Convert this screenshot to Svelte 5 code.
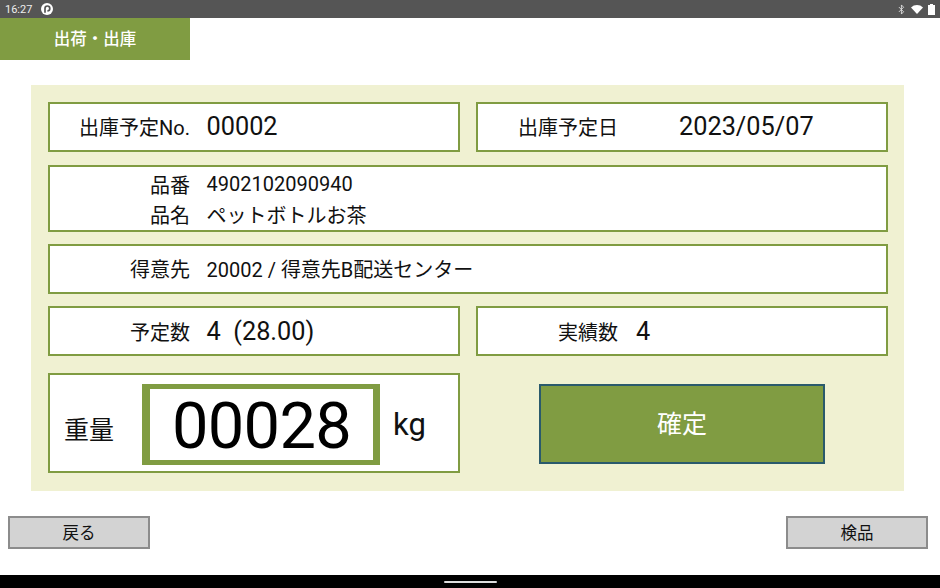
<script>
  // Static shipping screen; values would normally come from the picking API
  const rowGap = 12;
  const order = {
    no: '00002',
    date: '2023/05/07',
    code: '4902102090940',
    name: 'ペットボトルお茶',
    customer: '20002 / 得意先B配送センター',
    planned: '4',
    plannedWeight: '(28.00)',
    actual: '4',
    weight: '00028'
  };
</script>

<div class="screen" style="--row-gap: {rowGap}px">
  <div class="statusbar">
    <span class="time">16:27</span>
    <svg class="app-icon" viewBox="0 0 12 12" width="12" height="12">
      <circle cx="6" cy="6" r="6" fill="#fff" />
      <path d="M4 9.800V5.400a2.400 2.400 0 1 1 2.400 2.400" fill="none" stroke="#555" stroke-width="1.700" />
    </svg>
    <span class="spacer"></span>
    <svg class="bt" viewBox="0 0 8 12" width="7" height="11">
      <path d="M1 3.200l5.400 5.400-2.500 2.600v-10.400l2.500 2.600-5.400 5.400" fill="none" stroke="#e4e4e4" stroke-width="1" />
    </svg>
    <svg class="wifi" viewBox="0 0 12 9" width="12" height="9">
      <path d="M0 2.400a9 9 0 0 1 12 0l-6 6.600z" fill="#fff" />
    </svg>
    <svg class="battery" viewBox="0 0 7 11" width="7" height="11">
      <path d="M2 0h3v1h2v10h-7v-10h2z" fill="#fff" />
    </svg>
  </div>

  <div class="tab">出荷・出庫</div>

  <main class="panel">
    <div class="row two">
      <div class="box head">
        <span class="label">出庫予定No.</span>
        <span class="value big">{order.no}</span>
      </div>
      <div class="box head">
        <span class="label">出庫予定日</span>
        <span class="value big date">{order.date}</span>
      </div>
    </div>

    <div class="box item">
      <div class="line">
        <span class="label">品番</span>
        <span class="value">{order.code}</span>
      </div>
      <div class="line">
        <span class="label">品名</span>
        <span class="value">{order.name}</span>
      </div>
    </div>

    <div class="box customer">
      <span class="label">得意先</span>
      <span class="value">{order.customer}</span>
    </div>

    <div class="row two">
      <div class="box">
        <span class="label">予定数</span>
        <span class="value big">{order.planned}&nbsp;&nbsp;{order.plannedWeight}</span>
      </div>
      <div class="box">
        <span class="label">実績数</span>
        <span class="value big actual">{order.actual}</span>
      </div>
    </div>

    <div class="row two last">
      <div class="box scale">
        <span class="scale-label">重量</span>
        <div class="weight">{order.weight}</div>
        <span class="unit">kg</span>
      </div>
      <div class="confirm-wrap">
        <button class="confirm">確定</button>
      </div>
    </div>
  </main>

  <div class="footer">
    <button class="nav-btn">戻る</button>
    <button class="nav-btn">検品</button>
  </div>

  <div class="navbar"><span class="pill"></span></div>
</div>

<style>
  :global(body) {
    margin: 0;
    background: #fff;
  }

  .screen {
    width: 940px;
    height: 588px;
    display: flex;
    flex-direction: column;
    overflow: hidden;
    font-family: Roboto, "Noto Sans CJK JP", sans-serif;
    color: #111;
  }

  .statusbar {
    height: 18px;
    flex: none;
    background: #555;
    display: flex;
    align-items: center;
    padding: 0 5px;
    color: #eee;
    font-size: 11px;
  }

  .app-icon {
    margin-left: 9px;
  }

  .spacer {
    flex: 1;
  }

  .wifi {
    margin-left: 6px;
    margin-right: 5px;
  }

  .tab {
    box-sizing: border-box;
    width: 190px;
    height: 42px;
    padding-bottom: 2px;
    flex: none;
    background: #809c42;
    color: #fff;
    font-size: 16.5px;
    font-weight: 500;
    display: flex;
    align-items: center;
    justify-content: center;
  }

  .panel {
    margin: 25px 36px 0 31px;
    height: 372px;
    flex: none;
    padding: 17px 16px 17px 17px;
    background: #f0f1d2;
    display: flex;
    flex-direction: column;
    gap: var(--row-gap);
  }

  .row.two {
    display: grid;
    grid-template-columns: 412px 412px;
    column-gap: 16px;
  }

  .row.two:first-child {
    margin-bottom: 1px;
  }

  .row.last {
    margin-top: 5px;
  }

  .box {
    box-sizing: border-box;
    height: 50px;
    background: #fff;
    border: 2px solid #809c42;
    display: flex;
    align-items: center;
  }

  .box.head {
    padding-bottom: 1px;
  }

  .box.customer {
    padding-bottom: 2px;
  }

  .item {
    height: 67px;
    padding-top: 1px;
    flex-direction: column;
    align-items: stretch;
    justify-content: center;
  }

  .line {
    display: flex;
    align-items: center;
    height: 30px;
  }

  .label {
    width: 140px;
    flex: none;
    text-align: right;
    font-size: 20px;
    white-space: nowrap;
  }

  .value {
    margin-left: 16.5px;
    font-size: 20px;
    white-space: nowrap;
  }

  .value.big {
    font-size: 25.3px;
  }

  .value.date {
    margin-left: 61px;
  }

  .value.actual {
    margin-left: 18px;
  }

  .scale {
    height: 100px;
    padding-left: 14px;
  }

  .scale-label {
    font-size: 25px;
    width: 78px;
    flex: none;
    margin-top: 10px;
  }

  .weight {
    box-sizing: border-box;
    width: 238px;
    height: 81px;
    margin-top: 2px;
    padding-top: 3px;
    border-style: solid;
    border-color: #809c42;
    border-width: 5px 7px 5px 8px;
    font-size: 65px;
    letter-spacing: -0.7px;
    display: flex;
    align-items: center;
    justify-content: center;
    color: #000;
  }

  .unit {
    margin: 3px 0 0 13px;
    font-size: 31px;
  }

  .confirm-wrap {
    display: flex;
    align-items: center;
    padding-left: 63px;
    padding-top: 1px;
  }

  .confirm {
    width: 286px;
    height: 80px;
    background: #809c42;
    border: 2px solid #2a5a6c;
    color: #fff;
    font: inherit;
    font-size: 25px;
    padding: 0 0 3px;
  }

  .footer {
    display: flex;
    justify-content: space-between;
    padding: 25px 12px 0 8px;
    flex: 1;
  }

  .nav-btn {
    width: 142px;
    height: 33px;
    background: #d3d3d3;
    border: 2px solid #8c8c8c;
    color: #111;
    font: inherit;
    font-size: 16.5px;
    padding: 0 0 2px;
  }

  .navbar {
    height: 13px;
    flex: none;
    background: #000;
    display: flex;
    justify-content: center;
    align-items: center;
  }

  .pill {
    width: 53px;
    height: 2px;
    margin-left: 1px;
    border-radius: 1px;
    background: #ddd;
  }
</style>
